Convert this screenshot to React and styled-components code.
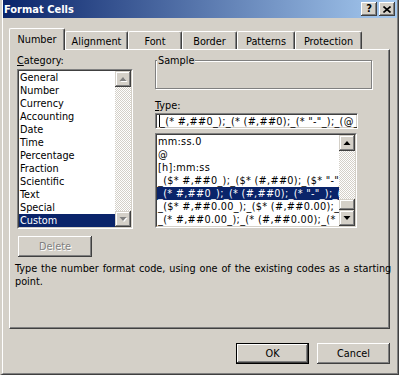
import React from "react";
import styled, { createGlobalStyle } from "styled-components";

const GlobalStyle = createGlobalStyle`
  html, body { margin: 0; padding: 0; background: #d4d0c8; }
  body {
    font-family: "DejaVu Sans Condensed", "DejaVu Sans", sans-serif;
    font-stretch: semi-condensed;
    font-size: 10.8px;
    line-height: 13px;
    color: #000;
  }
  * { box-sizing: border-box; }
`;

const raised = `
  background: #d4d0c8;
  box-shadow: inset -1px -1px 0 #404040, inset 1px 1px 0 #fff,
    inset -2px -2px 0 #808080, inset 2px 2px 0 #d4d0c8;
`;

const Window = styled.div`
  width: 399px;
  height: 375px;
  background: #d4d0c8;
  border-left: 2px solid #d4d0c8;
  border-right: 1px solid #404040;
  border-bottom: 1px solid #404040;
`;

const Frame = styled.div`
  height: 100%;
  display: flex;
  flex-direction: column;
  border-left: 1px solid #fff;
  border-right: 1px solid #808080;
  border-bottom: 1px solid #808080;
`;

const TitleBar = styled.div`
  height: 18px;
  display: flex;
  align-items: center;
  padding: 0 2px 0 1px;
  background: linear-gradient(to right, #0a246a, #a6caf0);
`;

const TitleText = styled.div`
  flex: 1;
  color: #fff;
  font-weight: bold;
  font-size: 11px;
`;

const CaptionButton = styled.div`
  ${raised}
  width: 16px;
  height: 14px;
  margin-left: 2px;
  display: flex;
  align-items: center;
  justify-content: center;
  font-weight: bold;
  font-size: 11px;
  line-height: 12px;
`;

const Body = styled.div`
  padding: 10px 6px 0 6px;
  display: flex;
  flex-direction: column;
`;

const TabStrip = styled.div`
  height: 21px;
  display: flex;
  align-items: flex-end;
  position: relative;
  z-index: 1;
`;

const Tab = styled.div`
  width: ${(p) => p.$w}px;
  height: ${(p) => (p.$active ? 22 : 18)}px;
  margin-bottom: ${(p) => (p.$active ? -1 : 0)}px;
  padding-top: ${(p) => (p.$active ? 4 : 3)}px;
  text-align: center;
  background: #d4d0c8;
  border-top: 1px solid #fff;
  border-left: 1px solid #fff;
  border-right: 1px solid #404040;
  border-top-left-radius: 2px;
  border-top-right-radius: 2px;
  box-shadow: inset -1px 0 0 #808080;
`;

const Panel = styled.div`
  width: 381px;
  height: 280px;
  border: 1px solid;
  border-color: #fff #404040 #404040 #fff;
  box-shadow: inset -1px -1px 0 #808080;
  padding: 4px 0 0 5px;
`;

const Columns = styled.div`
  display: flex;
  gap: 22px;
  margin-left: 2px;
`;

const LeftColumn = styled.div`
  width: 116px;
  display: flex;
  flex-direction: column;
`;

const RightColumn = styled.div`
  width: 217px;
  display: flex;
  flex-direction: column;
`;

const Label = styled.div`
  height: 13px;
  margin-top: ${(p) => p.$mt || 0}px;
`;

const Sunken = styled.div`
  width: ${(p) => p.$w}px;
  height: ${(p) => p.$h}px;
  margin-top: ${(p) => p.$mt || 0}px;
  background: #fff;
  border: 1px solid;
  border-color: #808080 #fff #fff #808080;
`;

const SunkenInner = styled.div`
  height: 100%;
  display: flex;
  border: 1px solid;
  border-color: #404040 #d4d0c8 #d4d0c8 #404040;
  overflow: hidden;
`;

const Rows = styled.div`
  flex: 1;
  min-width: 0;
  overflow: hidden;
  letter-spacing: ${(p) => (p.$code ? "0.3px" : "normal")};
`;

const Row = styled.div`
  height: 13px;
  padding-left: 1px;
  white-space: nowrap;
  overflow: hidden;
  background: ${(p) => (p.$selected ? "#0a246a" : "transparent")};
  color: ${(p) => (p.$selected ? "#fff" : "#000")};
`;

const ScrollBar = styled.div`
  width: 16px;
  display: flex;
  flex-direction: column;
`;

const Track = styled.div`
  flex: 1;
  background-color: #d4d0c8;
  background-image: conic-gradient(#fff 25%, #d4d0c8 0 50%, #fff 0 75%, #d4d0c8 0);
  background-size: 2px 2px;
`;

const ArrowButton = styled.div`
  ${raised}
  width: 16px;
  height: 16px;
  flex: none;
  display: flex;
  align-items: center;
  justify-content: center;
  box-shadow: inset -1px -1px 0 #404040, inset 1px 1px 0 #d4d0c8,
    inset -2px -2px 0 #808080, inset 2px 2px 0 #fff;
`;

const Thumb = styled.div`
  ${raised}
  height: 11px;
  flex: none;
  box-shadow: inset -1px -1px 0 #404040, inset 1px 1px 0 #d4d0c8,
    inset -2px -2px 0 #808080, inset 2px 2px 0 #fff;
`;

const PushButton = styled.div`
  ${raised}
  width: ${(p) => p.$w}px;
  height: 21px;
  display: flex;
  align-items: center;
  justify-content: center;
  color: ${(p) => (p.$disabled ? "#808080" : "#000")};
  text-shadow: ${(p) => (p.$disabled ? "1px 1px 0 #fff" : "none")};
  ${(p) =>
    p.$default &&
    `box-shadow: inset 0 0 0 1px #000, inset -2px -2px 0 #404040, inset 2px 2px 0 #fff,
      inset -3px -3px 0 #808080;`}
`;

const DeleteButton = styled(PushButton)`
  margin-top: 7px;
  margin-left: 1px;
`;

const Group = styled.div`
  position: relative;
  margin-top: 6px;
  height: 29px;
  border: 1px solid #808080;
  box-shadow: 1px 1px 0 #fff, inset 1px 1px 0 #fff;
`;

const GroupLabel = styled.div`
  position: absolute;
  top: -7px;
  left: 1px;
  padding: 0 1px;
  background: #d4d0c8;
`;

const TypeField = styled.div`
  width: 203px;
  height: 16px;
  margin-top: 1px;
  background: #fff;
  border: 1px solid;
  border-color: #808080 #fff #fff #808080;
  box-shadow: inset 1px 1px 0 #404040, inset -1px -1px 0 #d4d0c8;
  padding: 1px 0 0 3px;
  white-space: nowrap;
  overflow: hidden;
  letter-spacing: 0.3px;
`;

const Caret = styled.span`
  display: inline-block;
  width: 0;
  height: 12px;
  vertical-align: -2px;
  border-left: 1px solid #000;
`;

const Description = styled.div`
  margin-top: 5px;
  white-space: nowrap;
  word-spacing: 0.8px;
`;

const ButtonRow = styled.div`
  display: flex;
  justify-content: flex-end;
  gap: 8px;
  margin-top: 14px;
  padding-right: 1px;
`;

function Arrow({ down, disabled }) {
  const pts = down ? "0,0 7,0 3.5,4" : "3.5,0 7,4 0,4";
  return (
    <svg width="8" height="6" viewBox="-0.5 -1 8 6" style={{ overflow: "visible" }}>
      {disabled && <polygon points={pts} fill="#fff" transform="translate(1 1)" />}
      <polygon points={pts} fill={disabled ? "#808080" : "#000"} />
    </svg>
  );
}

function CloseGlyph() {
  return (
    <svg width="8" height="7" viewBox="0 0 8 7">
      <path d="M0.5 0.5 L7.5 6.5 M7.5 0.5 L0.5 6.5" stroke="#000" strokeWidth="1.6" />
    </svg>
  );
}

const tabs = [
  { name: "Number", w: 56 },
  { name: "Alignment", w: 63 },
  { name: "Font", w: 54 },
  { name: "Border", w: 55 },
  { name: "Patterns", w: 58 },
  { name: "Protection", w: 67 },
];

const categories = [
  "General", "Number", "Currency", "Accounting", "Date", "Time",
  "Percentage", "Fraction", "Scientific", "Text", "Special", "Custom",
];

const formats = [
  "mm:ss.0",
  "@",
  "[h]:mm:ss",
  '_($* #,##0_);_($* (#,##0);_($* "-"_);_(@_)',
  '_(* #,##0_);_(* (#,##0);_(* "-"_);_(@_)',
  '_($* #,##0.00_);_($* (#,##0.00);_($* "-"??_);_(@_)',
  '_(* #,##0.00_);_(* (#,##0.00);_(* "-"??_);_(@_)',
];

export default function App() {
  return (
    <>
      <GlobalStyle />
      <Window>
        <Frame>
          <TitleBar>
            <TitleText>Format Cells</TitleText>
            <CaptionButton>?</CaptionButton>
            <CaptionButton>
              <CloseGlyph />
            </CaptionButton>
          </TitleBar>
          <Body>
            <TabStrip>
              {tabs.map((t, i) => (
                <Tab key={t.name} $w={t.w} $active={i === 0}>
                  {t.name}
                </Tab>
              ))}
            </TabStrip>
            <Panel>
              <Columns>
                <LeftColumn>
                  <Label>
                    <u>C</u>ategory:
                  </Label>
                  <Sunken $w={116} $h={160} $mt={2}>
                    <SunkenInner>
                      <Rows>
                        {categories.map((c) => (
                          <Row key={c} $selected={c === "Custom"}>
                            {c}
                          </Row>
                        ))}
                      </Rows>
                      <ScrollBar>
                        <ArrowButton>
                          <Arrow disabled />
                        </ArrowButton>
                        <Track />
                        <ArrowButton>
                          <Arrow down disabled />
                        </ArrowButton>
                      </ScrollBar>
                    </SunkenInner>
                  </Sunken>
                  <DeleteButton $w={74} $disabled>
                    Delete
                  </DeleteButton>
                </LeftColumn>
                <RightColumn>
                  <Group>
                    <GroupLabel>Sample</GroupLabel>
                  </Group>
                  <Label $mt={10}>
                    <u>T</u>ype:
                  </Label>
                  <TypeField>
                    <Caret />
                    {'_(* #,##0_);_(* (#,##0);_(* "-"_);_(@_)'}
                  </TypeField>
                  <Sunken $w={202} $h={95} $mt={4}>
                    <SunkenInner>
                      <Rows $code>
                        {formats.map((f, i) => (
                          <Row key={f} $selected={i === 4}>
                            {f}
                          </Row>
                        ))}
                      </Rows>
                      <ScrollBar>
                        <ArrowButton>
                          <Arrow />
                        </ArrowButton>
                        <Track />
                        <Thumb />
                        <ArrowButton>
                          <Arrow down />
                        </ArrowButton>
                      </ScrollBar>
                    </SunkenInner>
                  </Sunken>
                </RightColumn>
              </Columns>
              <Description>
                Type the number format code, using one of the existing codes as a starting
                <br />
                point.
              </Description>
            </Panel>
            <ButtonRow>
              <PushButton $w={73} $default>
                OK
              </PushButton>
              <PushButton $w={73}>Cancel</PushButton>
            </ButtonRow>
          </Body>
        </Frame>
      </Window>
    </>
  );
}
